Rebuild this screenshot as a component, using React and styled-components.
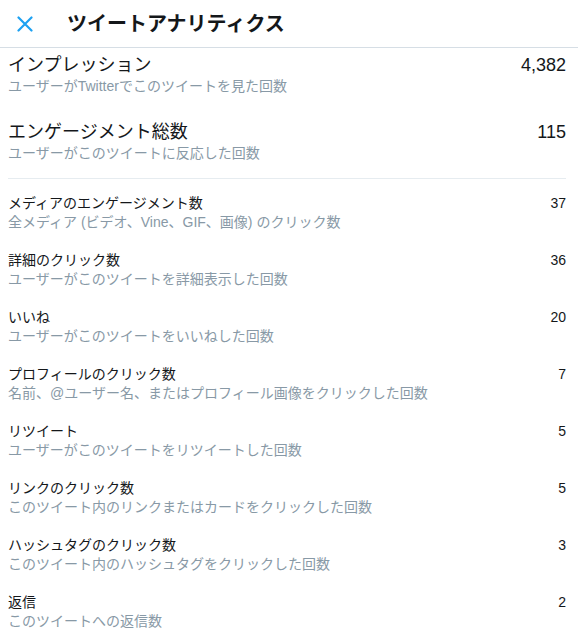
import React from "react";
import styled, { createGlobalStyle } from "styled-components";

const Global = createGlobalStyle`
  html, body { margin: 0; padding: 0; background: #ffffff; }
  body {
    font-family: "Liberation Sans", "Noto Sans CJK JP", sans-serif;
    color: #14171a;
  }
`;

const Page = styled.div`
  width: 578px;
  min-height: 638px;
  background: #ffffff;
`;

const Header = styled.header`
  display: flex;
  align-items: center;
  height: 47px;
  border-bottom: 1px solid #d6dee5;
`;

const CloseButton = styled.button`
  width: 50px;
  height: 47px;
  display: flex;
  align-items: center;
  justify-content: center;
  border: none;
  background: none;
  padding: 0;
  cursor: pointer;
`;

const Title = styled.h1`
  margin: 0 0 0 17px;
  font-size: 20px;
  line-height: 24px;
  font-weight: 700;
  color: #14171a;
`;

const Content = styled.main`
  padding: 0 12px 0 8px;
`;

const BigSection = styled.section`
  display: flex;
  flex-direction: column;
  gap: 25px;
  padding: 6px 0 15px;
  border-bottom: 1px solid #e6ecf0;
`;

const SmallList = styled.section`
  display: flex;
  flex-direction: column;
  gap: 19px;
  padding-top: 15px;
`;

const Row = styled.div`
  display: flex;
  justify-content: space-between;
  align-items: flex-start;
`;

const Label = styled.div`
  font-size: ${(p) => (p.$big ? "18px" : "14px")};
  line-height: ${(p) => (p.$big ? "22px" : "18px")};
  color: #14171a;
`;

const Desc = styled.div`
  font-size: 14px;
  line-height: 20px;
  color: #8899a6;
`;

const Value = styled.div`
  font-size: ${(p) => (p.$big ? "18px" : "14px")};
  line-height: ${(p) => (p.$big ? "22px" : "18px")};
  color: #14171a;
`;

const big = [
  { label: "インプレッション", desc: "ユーザーがTwitterでこのツイートを見た回数", value: "4,382" },
  { label: "エンゲージメント総数", desc: "ユーザーがこのツイートに反応した回数", value: "115" },
];

const small = [
  { label: "メディアのエンゲージメント数", desc: "全メディア (ビデオ、Vine、GIF、画像) のクリック数", value: "37" },
  { label: "詳細のクリック数", desc: "ユーザーがこのツイートを詳細表示した回数", value: "36" },
  { label: "いいね", desc: "ユーザーがこのツイートをいいねした回数", value: "20" },
  { label: "プロフィールのクリック数", desc: "名前、@ユーザー名、またはプロフィール画像をクリックした回数", value: "7" },
  { label: "リツイート", desc: "ユーザーがこのツイートをリツイートした回数", value: "5" },
  { label: "リンクのクリック数", desc: "このツイート内のリンクまたはカードをクリックした回数", value: "5" },
  { label: "ハッシュタグのクリック数", desc: "このツイート内のハッシュタグをクリックした回数", value: "3" },
  { label: "返信", desc: "このツイートへの返信数", value: "2" },
];

function Metric({ item, isBig }) {
  return (
    <Row>
      <div>
        <Label $big={isBig}>{item.label}</Label>
        <Desc>{item.desc}</Desc>
      </div>
      <Value $big={isBig}>{item.value}</Value>
    </Row>
  );
}

export default function App() {
  return (
    <Page>
      <Global />
      <Header>
        <CloseButton aria-label="閉じる">
          <svg width="16" height="16" viewBox="0 0 16 16">
            <path d="M1.5 1.5 L14.5 14.5 M14.5 1.5 L1.5 14.5" stroke="#1da1f2" strokeWidth="2.2" strokeLinecap="round" fill="none" />
          </svg>
        </CloseButton>
        <Title>ツイートアナリティクス</Title>
      </Header>
      <Content>
        <BigSection>
          {big.map((m) => (
            <Metric key={m.label} item={m} isBig />
          ))}
        </BigSection>
        <SmallList>
          {small.map((m) => (
            <Metric key={m.label} item={m} />
          ))}
        </SmallList>
      </Content>
    </Page>
  );
}
